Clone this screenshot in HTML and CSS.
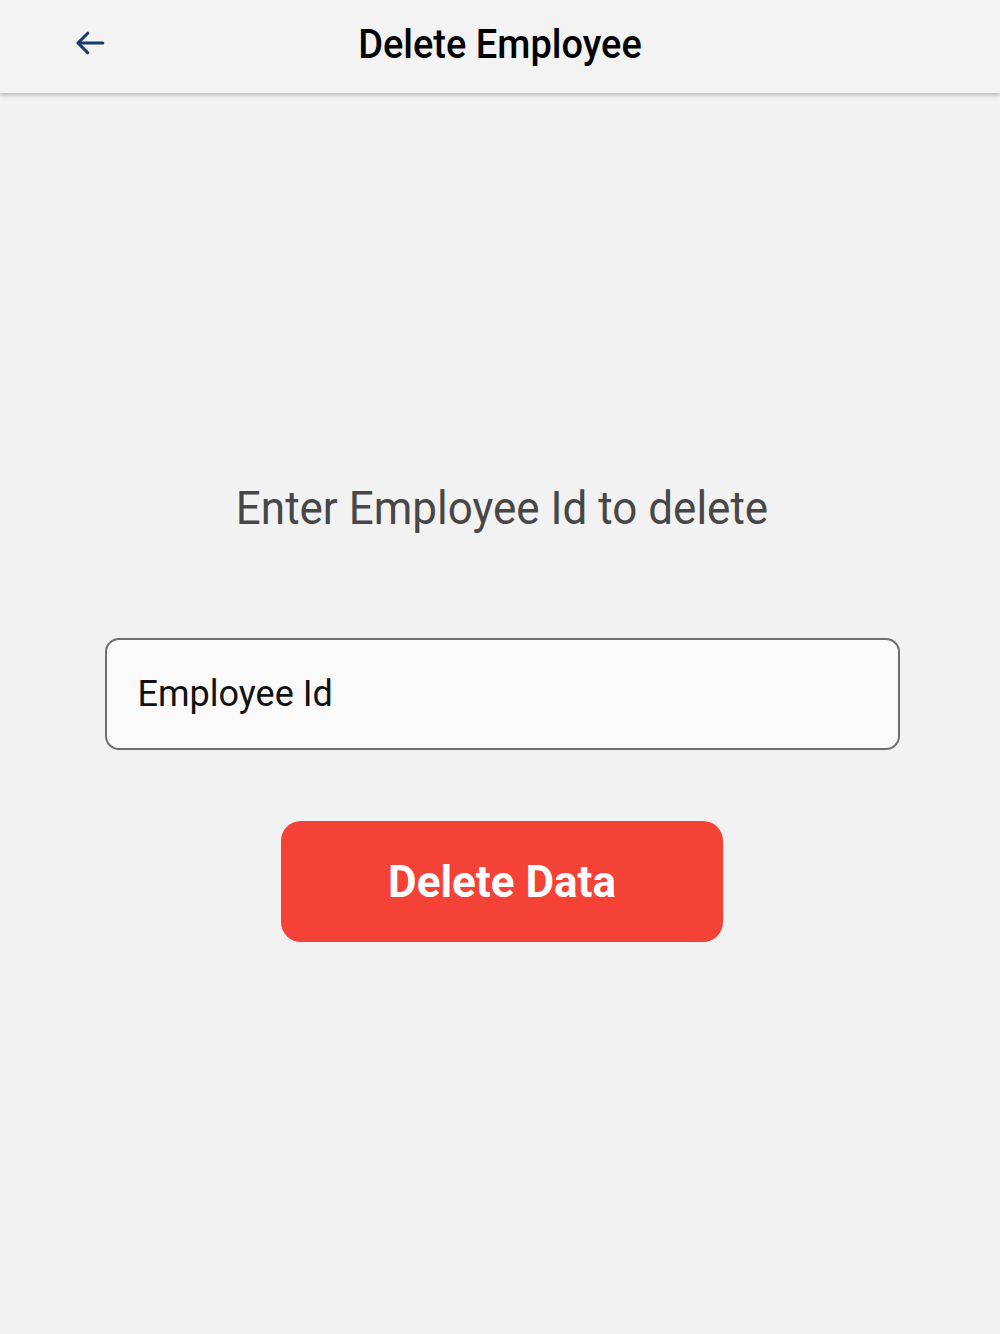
FILE: index.html
```html
<!DOCTYPE html>
<html lang="en">
<head>
    <meta charset="UTF-8" />
    <meta name="viewport" content="width=device-width, initial-scale=1.0" />
    <title>Delete Employee</title>
    <link rel="stylesheet" href="styles.css">
</head>
<body>
    <header class="app-bar">
        <button class="back-btn" aria-label="Back">
            <svg width="36" height="36" viewBox="0 0 24 24" fill="none" stroke="#163a6b" stroke-width="2.1" stroke-linecap="round" stroke-linejoin="round">
                <path d="M20.5 12H4.5" />
                <path d="M10.5 5.5L4 12l6.5 6.5" />
            </svg>
        </button>
        <h1 class="title">Delete Employee</h1>
    </header>

    <main class="content">
        <p class="prompt">Enter Employee Id to delete</p>

        <div class="field">
            <input type="text" id="empId" placeholder="Employee Id" />
        </div>

        <button class="delete-btn">Delete Data</button>
    </main>
</body>
</html>
```

FILE: styles.css
```css
* {
    box-sizing: border-box;
}
body {
    margin: 0;
    min-height: 1334px;
    background-color: #f2f2f2;
    font-family: Roboto, "Noto Sans", sans-serif;
}
.app-bar {
    position: relative;
    height: 93px;
    display: flex;
    align-items: center;
    justify-content: center;
    background-color: #f3f3f3;
    box-shadow: 0 2px 4px rgba(0,0,0,0.25);
}
.back-btn {
    position: absolute;
    left: 72px;
    top: 25px;
    padding: 0;
    border: none;
    background: none;
    display: flex;
}
.title {
    margin: 0 0 6px;
    font-size: 38px;
    font-weight: 500;
    color: #000;
    transform: scaleY(1.08);
}
.content {
    display: flex;
    flex-direction: column;
    align-items: center;
    padding: 380px 0 0 4px;
}
.prompt {
    margin: 0;
    font-size: 44px;
    color: #474747;
    line-height: 70px;
    transform: scaleY(1.06);
}
.field {
    margin-top: 95px;
    width: 795px;
}
#empId {
    width: 100%;
    height: 112px;
    padding: 0 31px;
    border: 2px solid #6e6e6e;
    border-radius: 14px;
    background-color: #fafafa;
    font-family: Roboto, "Noto Sans", sans-serif;
    font-size: 36px;
    outline: none;
}
#empId::placeholder {
    color: #111;
}
.delete-btn {
    margin-top: 71px;
    width: 442px;
    height: 121px;
    border: none;
    border-radius: 20px;
    background-color: #f44336;
    color: #fff;
    font-family: Roboto, "Noto Sans", sans-serif;
    font-size: 44px;
    font-weight: 700;
    cursor: pointer;
}
```
